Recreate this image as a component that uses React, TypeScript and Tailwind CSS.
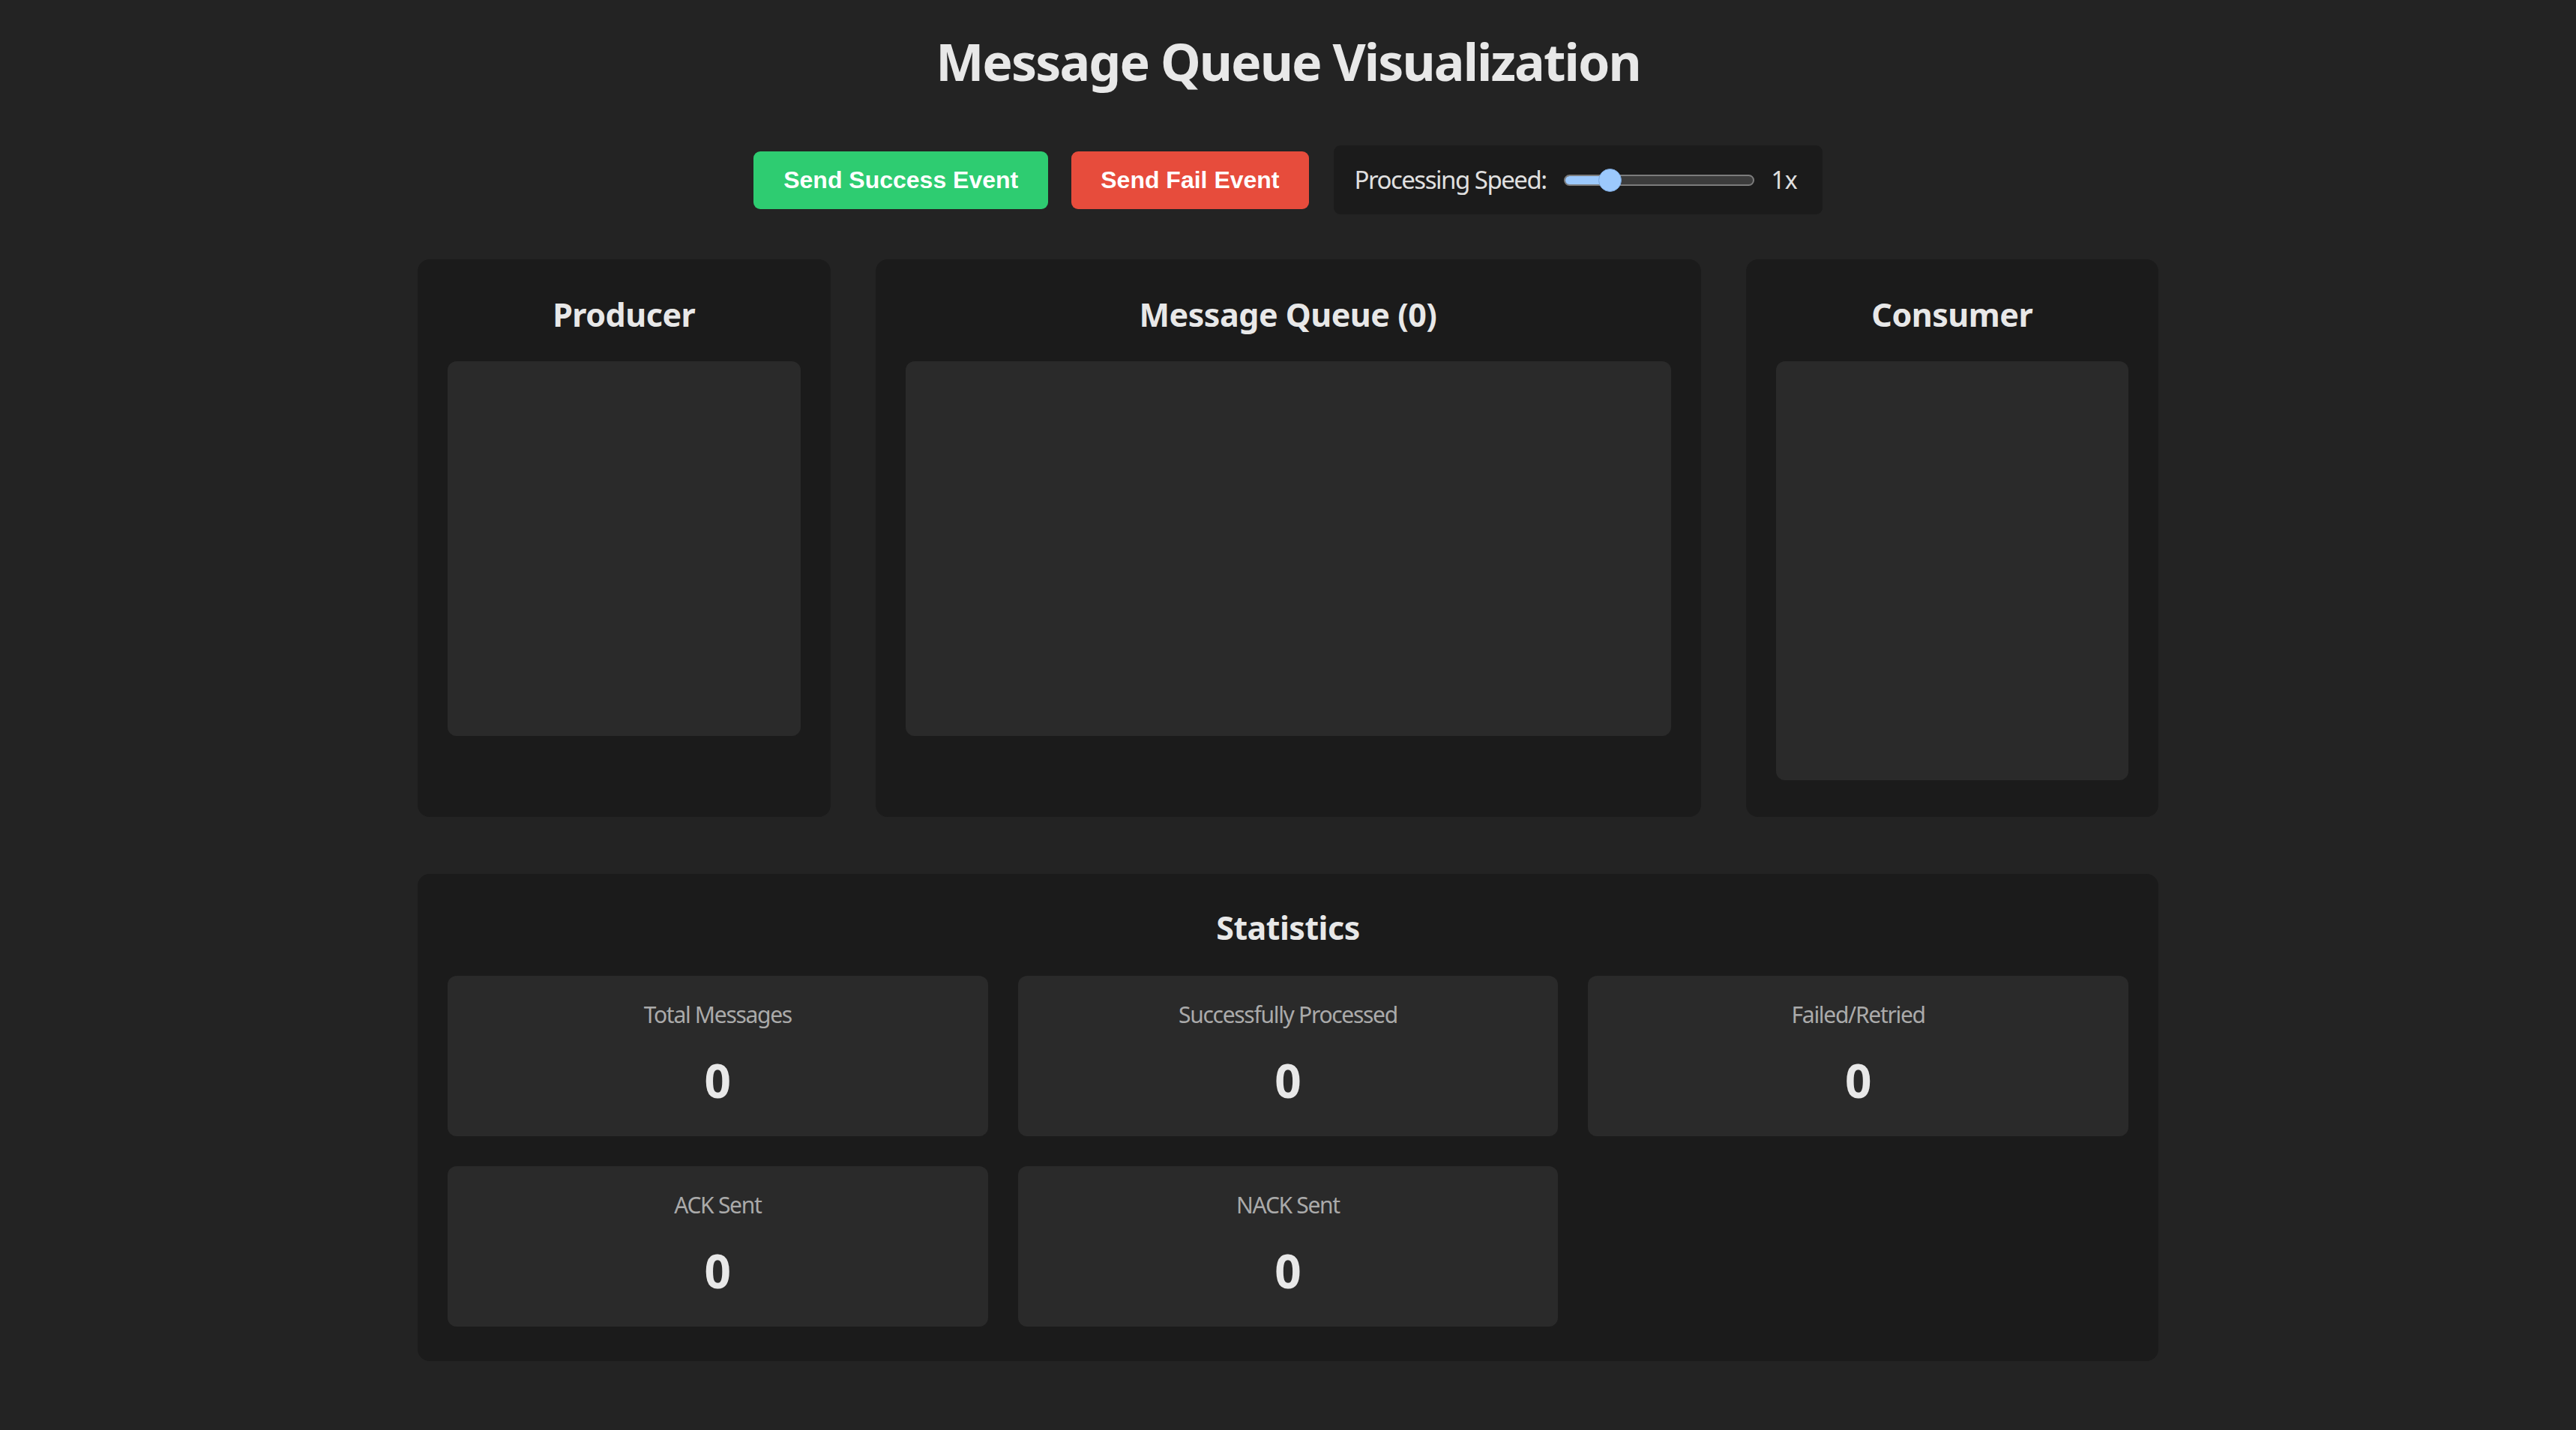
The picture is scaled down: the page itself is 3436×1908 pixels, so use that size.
import React from "react";

const panelTitle =
  "text-center text-[43px] leading-[60px] font-bold text-[#e8e8e8] tracking-[-0.5px]";

function StatCard({ label, value }: { label: string; value: string }) {
  return (
    <div className="h-[214px] rounded-[12px] bg-[#2a2a2a] pt-[31px] flex flex-col items-center">
      <div className="text-[30px] leading-[42px] text-[#aaaaaa] tracking-[-1.3px]">{label}</div>
      <div className="mt-[24px] text-[62px] leading-[84px] font-bold text-[#e8e8e8]">{value}</div>
    </div>
  );
}

export default function App() {
  return (
    <div className="min-h-screen bg-[#232323] text-[#e8e8e8] font-['Noto_Sans','Open_Sans',sans-serif]">
      <div className="w-[2322px] mx-auto pt-[36px] pb-[90px]">
        <h1 className="text-center text-[68px] leading-[92px] font-bold tracking-[-1.9px]">
          Message Queue Visualization
        </h1>

        <div className="mt-[66px] flex items-center justify-center">
          <button className="h-[77px] px-[40px] rounded-[9px] bg-[#2ecc71] text-white font-bold text-[32px] font-['Liberation_Sans',Arial,sans-serif]">
            Send Success Event
          </button>
          <button className="ml-[31px] h-[77px] px-[39px] rounded-[9px] bg-[#e74c3c] text-white font-bold text-[32px] font-['Liberation_Sans',Arial,sans-serif]">
            Send Fail Event
          </button>
          <div className="ml-[33px] h-[92px] pl-[28px] pr-[33px] rounded-[9px] bg-[#1b1b1b] flex items-center">
            <span className="text-[33px] text-[#e0e0e0] tracking-[-1.5px]">Processing Speed:</span>
            <div className="ml-[23px] relative w-[254px] h-[15px] rounded-full border-2 border-[#7c7c7c] bg-[#3c3c3c]">
              <div className="absolute left-0 top-0 h-full w-[60px] rounded-l-full bg-[#9cc9fc]" />
              <div className="absolute left-[44px] top-[-10px] w-[31px] h-[31px] rounded-full bg-[#9cc9fc] border border-[#7aa7dc]" />
            </div>
            <span className="ml-[23px] text-[32px] text-[#e0e0e0]">1x</span>
          </div>
        </div>

        <div className="mt-[60px] grid grid-cols-[1fr_2fr_1fr] gap-[60px]">
          <div className="rounded-[16px] bg-[#1b1b1b] px-[40px] pt-[44px]">
            <h2 className={panelTitle}>Producer</h2>
            <div className="mt-[32px] h-[500px] rounded-[12px] bg-[#2a2a2a]" />
          </div>
          <div className="rounded-[16px] bg-[#1b1b1b] px-[40px] pt-[44px]">
            <h2 className={panelTitle}>Message Queue (0)</h2>
            <div className="mt-[32px] h-[500px] rounded-[12px] bg-[#2a2a2a]" />
          </div>
          <div className="rounded-[16px] bg-[#1b1b1b] px-[40px] pt-[44px] pb-[49px]">
            <h2 className={panelTitle}>Consumer</h2>
            <div className="mt-[32px] h-[559px] rounded-[12px] bg-[#2a2a2a]" />
          </div>
        </div>

        <div className="mt-[76px] rounded-[16px] bg-[#1b1b1b] px-[40px] pt-[42px] pb-[46px]">
          <h2 className={panelTitle}>Statistics</h2>
          <div className="mt-[34px] grid grid-cols-3 gap-[40px]">
            <StatCard label="Total Messages" value="0" />
            <StatCard label="Successfully Processed" value="0" />
            <StatCard label="Failed/Retried" value="0" />
            <StatCard label="ACK Sent" value="0" />
            <StatCard label="NACK Sent" value="0" />
          </div>
        </div>
      </div>
    </div>
  );
}
